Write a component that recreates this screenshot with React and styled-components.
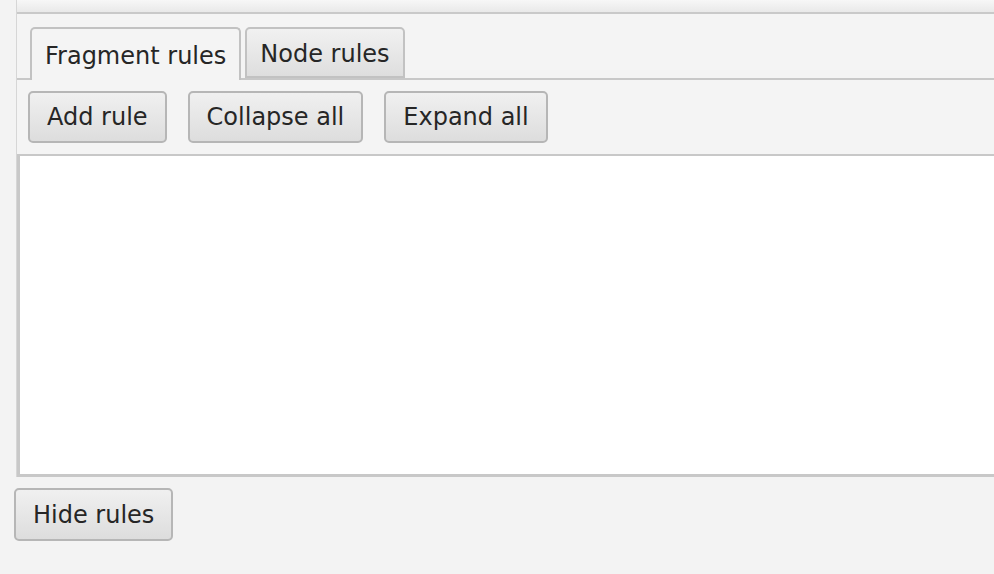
import React, { useState } from 'react';
import styled, { createGlobalStyle } from 'styled-components';

const GlobalStyle = createGlobalStyle`
  html, body {
    margin: 0;
    padding: 0;
    background: #f3f3f3;
    overflow: hidden;
  }
  body {
    font-family: "DejaVu Sans", "Liberation Sans", sans-serif;
    color: #262626;
  }
`;

const Page = styled.div`
  width: 994px;
  height: 574px;
  padding-left: 14px;
  box-sizing: border-box;
  background: #f3f3f3;
  overflow: hidden;
`;

const Panel = styled.div`
  margin-left: 2px;
  width: 1000px;
  display: flex;
  flex-direction: column;
  border-left: 1px solid #d6d6d6;
`;

const TopStrip = styled.div`
  height: 12px;
  background: linear-gradient(#f7f7f7, #e9e9e9);
  border-bottom: 2px solid #c9c9c9;
`;

const TabHeader = styled.div`
  display: flex;
  align-items: flex-end;
  gap: 4px;
  padding: 13px 0 0 13px;
  border-bottom: 2px solid #c8c8c8;
  background: #f4f4f4;
`;

const Tab = styled.div`
  box-sizing: border-box;
  height: ${p => (p.$active ? '53px' : '51px')};
  margin-bottom: ${p => (p.$active ? '-2px' : '0')};
  padding: 2px 13px 0;
  display: flex;
  align-items: center;
  font-size: 24px;
  border: 2px solid #c2c2c2;
  border-bottom: ${p => (p.$active ? 'none' : '2px solid #c2c2c2')};
  border-radius: 5px 5px 0 0;
  background: ${p => (p.$active ? '#f4f4f4' : 'linear-gradient(#f1f1f1, #dedede)')};
  cursor: pointer;
  white-space: nowrap;
`;

const Toolbar = styled.div`
  display: flex;
  gap: 21px;
  padding: 11px;
  border-bottom: 2px solid #c8c8c8;
  background: #f4f4f4;
`;

const Button = styled.button`
  box-sizing: border-box;
  height: ${p => (p.$tall ? '53px' : '52px')};
  padding: 0 17px;
  font-family: "DejaVu Sans", "Liberation Sans", sans-serif;
  font-size: 24px;
  color: #262626;
  border: 2px solid #b6b6b6;
  border-radius: 5px;
  background: linear-gradient(#f0f0f0, #dddddd);
  cursor: pointer;
  white-space: nowrap;
`;

const RuleList = styled.div`
  height: 318px;
  background: #ffffff;
  border-left: 3px solid #c8c8c8;
  border-bottom: 3px solid #c8c8c8;
`;

const Footer = styled.div`
  padding-top: 11px;
`;

export default function App() {
  const [tab, setTab] = useState('fragment');
  const [shown, setShown] = useState(true);

  return (
    <Page>
      <GlobalStyle />
      <Panel>
        <TopStrip />
        <TabHeader>
          <Tab $active={tab === 'fragment'} onClick={() => setTab('fragment')}>Fragment rules</Tab>
          <Tab $active={tab === 'node'} onClick={() => setTab('node')}>Node rules</Tab>
        </TabHeader>
        <Toolbar>
          <Button>Add rule</Button>
          <Button>Collapse all</Button>
          <Button>Expand all</Button>
        </Toolbar>
        <RuleList />
      </Panel>
      <Footer>
        <Button $tall onClick={() => setShown(!shown)}>{shown ? 'Hide rules' : 'Show rules'}</Button>
      </Footer>
    </Page>
  );
}
